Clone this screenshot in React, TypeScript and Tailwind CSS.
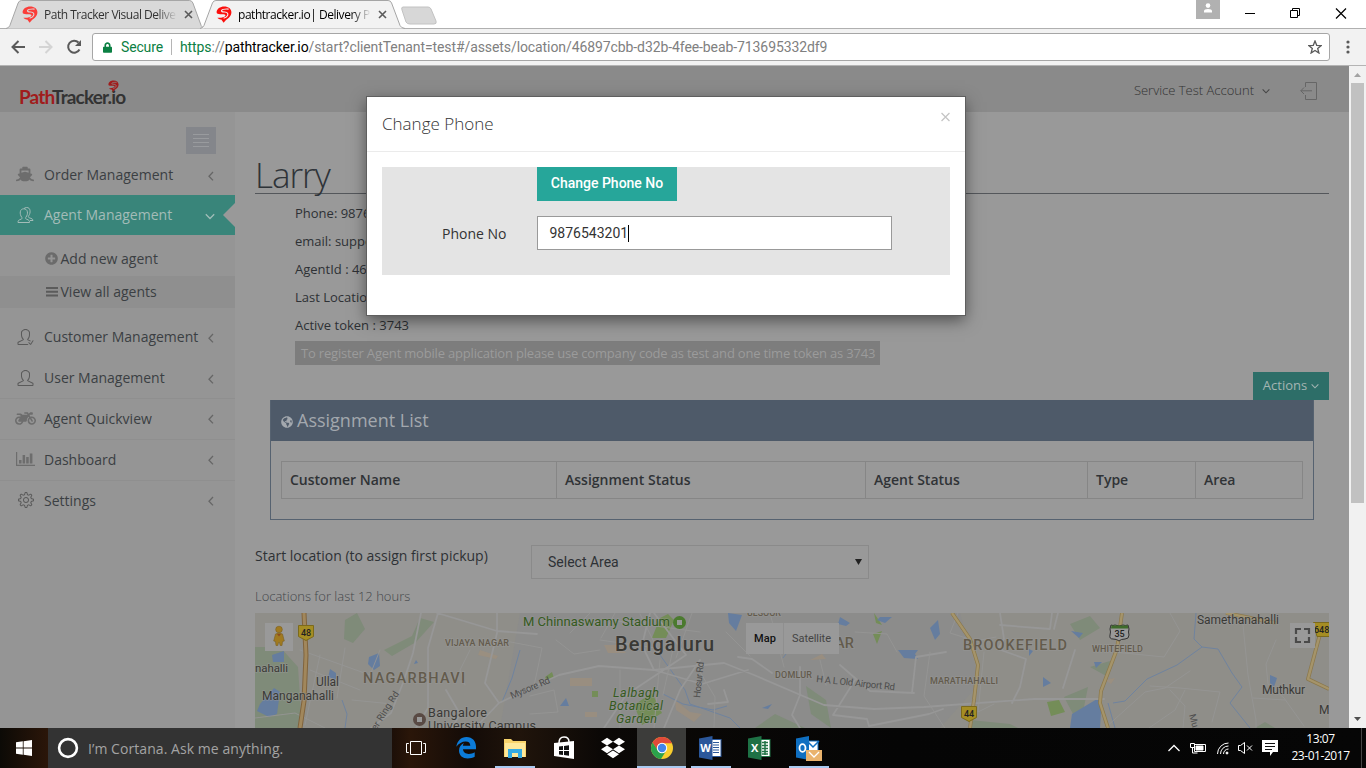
import React from "react";
import { FaShip, FaMotorcycle, FaGlobeAmericas, FaPlusCircle, FaDropbox, FaLock } from "react-icons/fa";
import { SlUser, SlUserFollowing, SlSettings } from "react-icons/sl";

function Mark({ color, hole = "#fff", className }: { color: string; hole?: string; className: string }) {
  return (
    <svg viewBox="0 0 16 17" className={className}>
      <path d="M.6 6.300C.6 2.600 4.200.4 8.200.4c4.200 0 7.200 2.300 7.200 5.900 0 3.600-2.700 6-5.400 7.700L7.600 16.700 5.300 13.600c-1.600-.2-3-.8-3.900-1.900 3.500.3 7.100-.4 8-2C10 8.300 7.500 8.100 5 8.200 2.500 8.300.6 8 .6 6.300z" fill={color} />
      <path d="M12.600 3.100C9 2.900 6 3.500 5.500 4.700c-.4 1.100 1.400 1.100 3.300 1.300 2.400.3 3.700 1.400 2.800 3.400-.6 1.300-2 2.200-4 2.800" fill="none" stroke={hole} strokeWidth="1.100" />
    </svg>
  );
}

function Angle({ className, d = "M6 1L2 5.200l4 4.200" }: { className: string; d?: string }) {
  return (
    <svg viewBox="0 0 10 10" className={className}>
      <path d={d} fill="none" stroke="currentColor" strokeWidth="1.300" />
    </svg>
  );
}

function Tab({ title, active, className }: { title: React.ReactNode; active?: boolean; className: string }) {
  return (
    <div className={"relative h-[29px] shrink-0 " + className}>
      <svg className="absolute inset-0 h-full w-full" viewBox="0 0 206 29" preserveAspectRatio="none">
        <path
          d="M0 28.500Q3 28 4 25.500L12.500 3Q13.500.5 16 .5H189Q191.500.5 192.500 3L201 25.500Q202 28 206 28.500"
          fill={active ? "#f2f2f2" : "#d9d9d9"}
          stroke="#a5a5a5"
        />
      </svg>
      <div className="relative flex h-[29px] items-center pl-[16px]">
        <Mark color={active ? "#fb0f0c" : "#fb3d39"} hole={active ? "#f2f2f2" : "#d9d9d9"} className="h-[17px] w-4" />
        <span className="ml-[6px] w-[133px] overflow-hidden whitespace-nowrap text-[12px] text-[#333] [mask-image:linear-gradient(to_right,#000_85%,transparent)]">
          {title}
        </span>
        <svg viewBox="0 0 9 9" className="ml-[7px] h-[9px] w-[9px]">
          <path d="M1 1l7 7M8 1L1 8" stroke="#5a5a5a" strokeWidth="1.600" />
        </svg>
      </div>
    </div>
  );
}

function Browser() {
  return (
    <header className="h-[66px] shrink-0 bg-white font-['Open_Sans',sans-serif]">
      <div className="flex h-[29px] border-b border-[#b0b0b0]">
        <Tab className="ml-[6px] w-[200px]" title={<span className="tracking-[-0.480px]">Path Tracker Visual Delive</span>} />
        <Tab className="-ml-[6px] w-[205px]" active title={<span className="tracking-[-0.460px] text-black">pathtracker.io| Delivery P</span>} />
        <svg className="-ml-[5px] mt-[6px] h-[19px] w-[38px]" viewBox="0 0 38 19">
          <path d="M3 1h25q2 0 3 2l5 12q1 3-2 3H10q-3 0-4-2L2 4Q1 1 3 1z" fill="#d7d7d7" stroke="#c2c2c2" />
        </svg>
        <div className="flex-1" />
        <div className="flex h-[19px] w-6 items-center justify-center bg-[#b1b1b1]">
          <svg viewBox="0 0 10 10" className="mb-[3px] h-[10px] w-[10px]" fill="#fff">
            <circle cx="5" cy="2.600" r="2.300" />
            <path d="M1 9.500V8q0-2 4-2t4 2v1.500z" />
          </svg>
        </div>
        <svg className="mr-[18px] h-[27px] w-[128px]" viewBox="1220 0 128 27" fill="none" stroke="#000">
          <path d="M1245 13.500h10" />
          <path d="M1290.500 10.500h7v7h-7zM1292.500 10.500v-2h7v7h-2" />
          <path d="M1336 8.500l10 10M1346 8.500l-10 10" strokeWidth="1.200" />
        </svg>
      </div>
      <div className="flex h-[37px] items-center border-b border-[#b4b4b4] bg-[#f2f2f2] pl-[10px]">
        <svg className="h-5 w-[73px]" viewBox="10 37 73 20" fill="none" strokeWidth="2">
          <path d="M25 47H12.500M18.500 41l-6 6 6 6" stroke="#5a5a5a" />
          <path d="M39 47h12.500M45.500 41l6 6-6 6" stroke="#d4d4d4" />
          <path d="M79.500 49.500a6 6 0 1 1-1-7" stroke="#5a5a5a" />
          <path d="M81 40v6h-6z" fill="#5a5a5a" />
        </svg>
        <div className="ml-[9px] flex h-7 w-[1238px] items-center rounded-[3px] border border-[#a6a6a6] bg-white pl-[10px] font-[Roboto,sans-serif] text-[14px]">
          <FaLock className="h-[11px] w-[9px] text-[#0b8043]" />
          <span className="ml-[9px] w-[42px] text-[#0b8043] tracking-[-0.150px]">Secure</span>
          <span className="ml-[8px] mr-[8px] h-4 w-px bg-[#b5b5b5]" />
          <span className="whitespace-nowrap text-[#808080] tracking-[-0.090px]">
            <span className="text-[#0b8043]">https</span>://<span className="text-black">pathtracker.io</span>
            /start?clientTenant=test#/assets/location/46897cbb-d32b-4fee-beab-713695332df9
          </span>
          <svg className="ml-auto mr-[7px] h-[14px] w-[14px]" viewBox="0 0 14 14">
            <path d="M7 1l1.700 4.300 4.500.3-3.500 2.900 1.200 4.500L7 10.500 3.100 13l1.200-4.500L.8 5.600l4.500-.3z" fill="none" stroke="#5a5a5a" strokeWidth="1.300" />
          </svg>
        </div>
        <svg className="ml-[16px] h-[14px] w-1" viewBox="0 0 4 14" fill="#5a5a5a">
          <circle cx="2" cy="2" r="1.600" /><circle cx="2" cy="7" r="1.600" /><circle cx="2" cy="12" r="1.600" />
        </svg>
      </div>
    </header>
  );
}

function NavRow({ icon, label, border, className = "h-[41px]", labelClass = "", open }: { icon: React.ReactNode; label: string; border?: boolean; className?: string; labelClass?: string; open?: boolean }) {
  return (
    <div className={"relative flex items-center pl-4 " + className + (border ? " border-t border-[#8f8f8f] pb-[2px]" : "")}>
      <span className="flex w-[19px] items-center justify-center">{icon}</span>
      <span className={"ml-[9px] flex-1 whitespace-nowrap text-[14px] " + labelClass}>{label}</span>
      {open ? (
        <>
          <Angle className="mr-[20px] mt-[2px] h-[10px] w-[10px] text-[#a0bdb8]" d="M.8 3.300L5 7.500l4.200-4.200" />
          <svg className="absolute right-0 top-[8px] h-6 w-3" viewBox="0 0 12 24"><path d="M12 0L0 12l12 12z" fill="#999" /></svg>
        </>
      ) : (
        <Angle className="mr-[18px] mt-[2px] h-[10px] w-[10px] text-[#666]" />
      )}
    </div>
  );
}

function Sidebar() {
  return (
    <nav className="w-[235px] shrink-0 bg-[#959595] pt-[15px] text-[#3b3f43]">
      <div className="ml-[186px] flex h-[27px] w-[30px] flex-col items-center justify-center gap-[3px] bg-[#84868b]">
        <i className="h-px w-4 bg-[#999b9e]" /><i className="h-px w-4 bg-[#999b9e]" /><i className="h-px w-4 bg-[#999b9e]" /><i className="h-px w-4 bg-[#999b9e]" />
      </div>
      <NavRow icon={<FaShip className="mb-[2px] mr-px h-4 w-[18px] text-[#6d6d6d]" />} label="Order Management" labelClass="tracking-[0.010px]" />
      <NavRow
        open
        className="h-[40px] bg-[#39857a] pb-px text-[#a3bcb8]"
        icon={
          <svg viewBox="0 0 17 16" className="h-4 w-[17px]" fill="none" stroke="currentColor">
            <path d="M1 15.500h11.500c0-2-.5-2.500-3-3.300-1-.4-1.200-1.200-.6-2 1.300-1.600 1.800-3.600 1.500-5.400C10 2.800 8.600 1.800 6.800 1.800S3.600 2.800 3.300 4.800c-.3 1.800.2 3.800 1.400 5.400.6.8.4 1.600-.6 2C1.600 13 1 13.500 1 15.500z" />
            <path d="M7 1.600C7.600.8 8.600.5 9.700.5c1.800 0 3.100 1 3.300 3 .3 1.800-.2 3.700-1.300 5.300-.6.8-.4 1.600.6 2 2.500.8 3.700 1.300 3.700 2.700H13" />
          </svg>
        }
        label="Agent Management"
      />
      <div className="h-[7px]" />
      <div className="flex h-[34px] items-center pb-[2px] pl-[45px] text-[14px]">
        <FaPlusCircle className="h-[13px] w-[13px] text-[#6b6b6b]" />
        <span className="ml-[2.500px]">Add new agent</span>
      </div>
      <div className="flex h-[32px] items-center bg-[#8f8f8f] pb-[2px] pl-[45px] text-[14px]">
        <svg viewBox="0 0 13 11" className="h-[11px] w-[13px]" fill="#5b5b5b"><path d="M1 1h12v2H1zM1 4.700h12v2H1zM1 8.500h12v2H1z" /></svg>
        <span className="ml-[2.500px]">View all agents</span>
      </div>
      <div className="h-[8px]" />
      <NavRow icon={<SlUserFollowing className="h-4 w-[17px] text-[#5a5a5a]" />} label="Customer Management" />
      <NavRow icon={<SlUser className="h-4 w-[17px] text-[#5a5a5a]" />} label="User Management" />
      <NavRow border icon={<FaMotorcycle className="h-[17px] w-[21px] shrink-0 text-[#6d6d6d]" />} label="Agent Quickview" />
      <NavRow
        border
        icon={<svg viewBox="0 0 19 14" className="mr-px h-[14px] w-[19px] shrink-0" fill="#6d6d6d"><path d="M0 0h1.200v12.800H19V14H0zM3 8h2.500v3.500H3zM6.600 3h2.500v8.500H6.600zM10.200 5h2.500v6.500h-2.500zM13.800 1.500h2.600v10h-2.600z" /></svg>}
        label="Dashboard"
      />
      <NavRow border icon={<SlSettings className="h-4 w-4 text-[#5a5a5a]" />} label="Settings" />
    </nav>
  );
}

function MapView() {
  return (
    <svg className="mt-[6px] block h-[115px] w-full font-[Roboto,sans-serif]" viewBox="255 613 1074 115">
      <rect x="255" y="613" width="1074" height="115" fill="#8f8e89" />
      <path d="M520 613h440l20 70-40 45H500z" fill="#8c8c8b" />
      {/* parks and forest */}
      <g fill="#7f8b79">
        <path d="M255 647h25l18 20 4 61h-47zM345 620l12-7 8 16-12 14-9-4zM384 650l28-14 8-18 14 4-18 20-24 14zM806 686l20 14 5 28-20-14zM755 728l20-14 30 14zM1070 624l20-8 10 12-20 12zM1090 667l20-6-2 16zM1064 697l24-10-8 40zM970 728v-8l40 4 8 4zM1255 728l10-6 10 6z" />
      </g>
      <g fill="#748d58">
        <path d="M545 677l7-5 2 6-7 3zM592 691h6v6h-6zM652 638l8-20 8-4 6 6-8 18zM634 705l18-12 10 20-20 12zM1047 702l12-2 6 12-14 4zM873 634l9-3-5 13zM874 613l8 12-6-2z" />
      </g>
      <g fill="#a18f79" opacity=".6">
        <path d="M570 678h22v8h-22zM604 645h16l6 8h-18zM675 700l15 12 12 2-8 8-18-12zM480 650l18 6-2 3-18-4zM1105 680l10-2-4 6zM585 712h12v5h-12zM810 660l12-6 4 5z" />
      </g>
      {/* lakes */}
      <g fill="#657d9f">
        <path d="M369 657l10-4 1 13-6 4-6-6zM330 669l6 4v6l-8-1zM272 655l12-4v11h-11zM260 704l14-16 6 4-3 22-8 3-12-6zM560 706l6-8 3 8zM414 664l2-4 2 3zM728 613l14 2-6 16-7-8zM840 617l10 6-4 3-8-2zM880 617h12l-7 6-8-3zM930 628l8-8 2 14-5 6zM898 650h20l-3 4 3 5-14-1zM762 708l10-4-4 5zM1071 631l12 2-4 5zM1094 662h8l-6 6zM1043 677l8 6-8 4zM1072 714l30-18-2 32h-30zM1270 675l7 3-3 9-4-4zM1029 649l4 2-4 5z" />
      </g>
      <g fill="none" stroke="#6f839f" strokeWidth="1">
        <path d="M345 728l2-14-5-14M520 650l-8 28-10 24M660 655l25 35 5 14 40 14 10 10M663 694l20 10 30 6 14-4M1196 613l-2 26 8 8-25 18-30 14-22 22-12 2M1202 647l16 2 14 24 10 14-12 16 20 25M1108 703l7 25M775 630l14 20-6 8" />
      </g>
      {/* roads */}
      <g fill="none" stroke="#979797" strokeLinecap="round" strokeLinejoin="round">
        <path strokeWidth="1.800" d="M421 613l-8 40-10 30-12 30-20 15M438 613l-10 35v60l-12 20M446 690l14 24-8 14M437 613l60 18 40 3M497 613v20l-12 50 14 20-24 25M499 703l60-28 40-9 55 4 70-7 30 12 70 30 50 4 50-2 110-8h70M650 613l-8 32 12 25 48 14 46-14M654 613l32 42-60 40-22 33M700 660l-20 30-16 38M724 690l4 12-20 2M800 667v28l-8 20 8 13M840 665l30 26 44 2M738 657l14 2 20 14M1000 625l50 4 2-16M1000 613l4 26-6 10 28 10-6 28-8 16M1075 650l-12 38M1058 613l-4 16M912 693l4-36 30-5M855 680l-22 35 34 4 2 7 60-12 14-5" />
        <path strokeWidth=".9" stroke="#959594" d="M300 650l70 25 10-25M320 655l-15 70M345 648l-8 50M310 670l50 20M470 650l-10 20 5 15M500 640l42 8-8 38M590 613l-20 20M600 640l70 10M640 614l20 40M610 620l90 12M615 613l-14 25M620 670v58M660 660l-6 68M675 640l-12 55M692 613l-16 45M700 672l15 25-1 30M726 632l24 24M770 613l14 54M820 660l6 25M855 632l32 2 10 18M930 652l-6 44 26 40M1170 613l10 18-16 26-60-6M1150 686l30 2 40 4-8 30M1242 615l6 60 8 45v8M1276 640l-10 24 2 20 16 14 20 28M1105 728l40-36 20-4 25-17M1170 690l15 16-2 22M984 652l-6 60 16-8M958 613l-8 20 26 8 20-4M1285 700l-32-2M1185 690l-10 20-26 18M255 718l40-5 30 15M352 700l40 4M530 696l24-6 4 22-28 2M556 640l18 14 26-4" />
      </g>
      {/* highways */}
      <g fill="none" strokeLinejoin="round">
        <path d="M304 613l2 42-2 46-4 27" stroke="#81643d" strokeWidth="5" />
        <path d="M304 613l2 42-2 46-4 27" stroke="#a1875c" strokeWidth="3" />
        <path d="M952 613l18 26 8 26-4 35-4 28M1122 613l-5 36-16 42-1 12 8 25M1226 613l50 10M1320 634l-12 45 21 10" stroke="#8b784b" strokeWidth="3.800" />
        <path d="M952 613l18 26 8 26-4 35-4 28M1122 613l-5 36-16 42-1 12 8 25M1226 613l50 10M1320 634l-12 45 21 10" stroke="#a5946a" strokeWidth="2.400" />
      </g>
      {/* labels */}
      <g stroke="#999" strokeWidth="1.600" paintOrder="stroke" strokeOpacity=".5" fill="#635b4c" fontWeight="500">
        <text x="445" y="646" fontSize="9" textLength="64">VIJAYA NAGAR</text>
        <text x="363" y="683" fontSize="14.500" textLength="102">NAGARBHAVI</text>
        <text x="747" y="616" fontSize="9" textLength="34">ULSOOR</text>
        <text x="835" y="648" fontSize="14.500" textLength="19">AR</text>
        <text x="775" y="678" fontSize="9" textLength="37">DOMLUR</text>
        <text x="963" y="650" fontSize="14.500" textLength="104">BROOKEFIELD</text>
        <text x="930" y="684" fontSize="9" textLength="68">MARATHAHALLI</text>
        <text x="1092" y="652" fontSize="9" textLength="51">WHITEFIELD</text>
      </g>
      <g stroke="#999" strokeWidth="1.600" paintOrder="stroke" strokeOpacity=".5" fill="#3a3935">
        <text x="615" y="651" fontSize="20" fontWeight="500" textLength="99">Bengaluru</text>
        <text x="255" y="672" fontSize="11.500" textLength="33">nahalli</text>
        <text x="316" y="686" fontSize="12" textLength="23">Ullal</text>
        <text x="262" y="700" fontSize="12" textLength="72">Manganahalli</text>
        <text x="428" y="717" fontSize="12.500" textLength="59">Bangalore</text>
        <text x="428" y="730" fontSize="12.500" textLength="108">University Campus</text>
        <text x="1197" y="624" fontSize="12" textLength="82">Samethanahalli</text>
        <text x="1262" y="694" fontSize="12" textLength="43">Muthkur</text>
        <text x="1319" y="714" fontSize="12">M</text>
      </g>
      <g stroke="#999" strokeWidth="1.600" paintOrder="stroke" strokeOpacity=".5" fill="#355a20">
        <text x="523" y="626" fontSize="13" textLength="147">M Chinnaswamy Stadium</text>
        <g fontStyle="italic" fontSize="12.500">
          <text x="613" y="697" textLength="46">Lalbagh</text>
          <text x="609" y="710" textLength="54">Botanical</text>
          <text x="616" y="723" textLength="41">Garden</text>
        </g>
      </g>
      <g fill="#4c4c4c" fontSize="9.500">
        <text transform="translate(512 699) rotate(-23)" textLength="42">Mysore Rd</text>
        <text transform="translate(376 731) rotate(-58)" textLength="44">er Ring Rd</text>
        <text transform="translate(700 698) rotate(-84)" textLength="36">Hosur Rd</text>
        <text transform="translate(816 682) rotate(6)" textLength="79">H A L Old Airport Rd</text>
        <text transform="translate(1189 715) rotate(75)">Mu</text>
      </g>
      <circle cx="679.500" cy="622.500" r="6.500" fill="#4b7a2f" /><rect x="677" y="620" width="5" height="5" fill="#999" />
      <circle cx="419.500" cy="719.500" r="6.500" fill="#594a44" /><rect x="417" y="717" width="5" height="5" fill="#999" />
      <g fill="#a58d23" stroke="#7c6a1c">
        <path d="M298.500 625.500h15v11l-7.500 4-7.500-4zM961.500 706.500h15v11l-7.500 4-7.500-4zM1313.500 622.500H1330v14h-13z" />
      </g>
      <g fontSize="9" fontWeight="500" fill="#222">
        <text x="301" y="636">48</text><text x="964" y="717">44</text><text x="1314" y="633">648</text>
      </g>
      <path d="M1111 625q2 1 4 0l4 1 4-1q2 1 5 0l1 4q-1 3 0 6 0 4-4 4-4 0-6 2-2-2-6-2-4 0-3-4 1-3 0-6z" fill="#999" stroke="#333" />
      <path d="M1111.500 625.500h16.500v3h-17z" fill="#3e6b2b" />
      <text x="1114.500" y="637" fontSize="9" fontWeight="500" fill="#222">35</text>
      {/* controls */}
      <rect x="265" y="623" width="28" height="28" fill="#999" />
      <circle cx="279" cy="629.500" r="3.300" fill="#a07a20" stroke="#7b6022" strokeWidth=".6" />
      <path d="M275.500 634q3.500-2 7 0l1.800 7-1.800.5-.5 4h-1.800l-.7-3h-1l-.7 3H276l-.5-4-1.800-.5z" fill="#a07a20" stroke="#7b6022" strokeWidth=".6" />
      <path d="M277 634l2 2.500 2-2.500z" fill="#8b4a20" />
      <rect x="746" y="623" width="93" height="31" fill="#999" />
      <path d="M783.500 623v31" stroke="#8f8f8f" />
      <text x="754" y="642" fontSize="11" fontWeight="500" textLength="22" fill="#111">Map</text>
      <text x="792" y="642" fontSize="11" textLength="39" fill="#444">Satellite</text>
      <rect x="1290" y="623" width="25" height="25" fill="#999" />
      <path d="M1296 634v-5h5M1304 629h5v5M1309 637v5h-5M1301 642h-5v-5" fill="none" stroke="#4a4a4a" strokeWidth="2.200" />
    </svg>
  );
}

function Content() {
  return (
    <main className="w-[1114px] bg-[#999] pl-5 pr-5 pt-[39px] text-[13px] text-[#2e3135]">
      <h1 className="h-[43px] border-b border-[#54575b] text-[35px] font-light leading-[48px] tracking-[-1px] text-[#2e3338]">Larry</h1>
      <ul className="ml-10 mt-[5px]">
        {["Phone: 987654", "email: suppor", "AgentId : 4689", "Last Location", "Active token : 3743"].map((t) => (
          <li key={t} className="h-7 leading-7">{t}</li>
        ))}
      </ul>
      <div className="ml-10 mt-[2px] h-6 w-[585px] whitespace-nowrap bg-[#7d7d7d] pl-[6px] text-[13px] leading-6 tracking-[-0.190px] text-[#9b9b9b]">
        To register Agent mobile application please use company code as test and one time token as 3743
      </div>
      <div className="mt-[7px] flex justify-end">
        <button className="flex h-7 w-[76px] items-center justify-center gap-1 bg-[#2d6e68] text-[13px] text-[#a4b5b3]">
          Actions
          <Angle className="h-[8px] w-[8px]" d="M.8 3L5 7.200 9.200 3" />
        </button>
      </div>
      <section className="mx-[15px] h-[120px] border border-[#566270]">
        <h2 className="-mt-px flex h-[41px] items-center bg-[#4e5a69] pl-[10px] text-[18px] text-[#a3a8ae]">
          <FaGlobeAmericas className="mr-[4px] mt-[2px] h-[12px] w-[12px]" />
          <span>Assignment List</span>
        </h2>
        <div className="mx-[10px] mt-5 grid h-[38px] grid-cols-[275px_309px_222px_108px_108px] border border-[#868686] text-[14px] font-semibold text-[#303336]">
          {["Customer Name", "Assignment Status", "Agent Status", "Type", "Area"].map((t) => (
            <div key={t} className="border-r border-[#868686] pl-2 leading-9 last:border-r-0">{t}</div>
          ))}
        </div>
      </section>
      <div className="mt-[25px] flex h-[34px]">
        <span className="w-[276px] text-[14px] leading-[22px]">Start location (to assign first pickup)</span>
        <div className="flex w-[338px] items-center border border-[#8a8a8a] pl-4 pr-[6px] font-[Roboto,sans-serif] text-[14px]">
          <span className="flex-1">Select Area</span>
          <svg viewBox="0 0 7 6" className="h-[6px] w-[7px]"><path d="M0 0h7L3.500 6z" fill="#222" /></svg>
        </div>
      </div>
      <p className="mt-[6px] h-[22px] text-[13px] font-light leading-[22px] text-[#44474a]">Locations for last 12 hours</p>
      <MapView />
    </main>
  );
}

function Modal() {
  return (
    <div className="absolute left-[367px] top-[97px] h-[218px] w-[598px] bg-white shadow-[0_5px_15px_rgba(0,0,0,0.5)] outline outline-[#5f5f5f]">
      <div className="flex h-[55px] justify-between border-b border-[#ebebeb] px-[15px]">
        <h4 className="mt-[15px] text-[17px] font-light leading-[24px] text-[#333]">Change Phone</h4>
        <svg viewBox="0 0 10 10" className="mt-[15px] h-[10px] w-[9px]"><path d="M.6.6l8.800 8.800M9.400.6L.6 9.400" stroke="#c4c4c4" strokeWidth="1.400" /></svg>
      </div>
      <div className="mx-[15px] mt-[15px] h-[108px] bg-[#e4e4e4] font-[Roboto,sans-serif] text-[14px]">
        <button className="ml-[155px] block h-[34px] w-[140px] bg-[#26a69a] pb-[2px] font-medium text-white">Change Phone No</button>
        <div className="mt-[15px] flex h-[34px] items-center">
          <label className="w-[124.500px] text-right font-['Open_Sans',sans-serif] text-[14px] text-[#333]">Phone No</label>
          <div className="ml-[30.500px] flex h-[34px] w-[355px] items-center border border-[#999] bg-white pl-[11.500px] text-[#333]">
            <span>9876543201</span>
            <i className="h-[17px] w-px bg-black" />
          </div>
        </div>
      </div>
    </div>
  );
}

function Slot({ children, className = "" }: { children: React.ReactNode; className?: string }) {
  return <div className={"flex h-10 w-[49px] shrink-0 flex-col items-center " + className}>{children}</div>;
}

function Bar({ className = "w-10" }: { className?: string }) {
  return <i className={"mt-auto h-[2px] shrink-0 bg-[#a9c9f0] " + className} />;
}

function Office({ letter, color, dark }: { letter: string; color: string; dark: string }) {
  return (
    <svg viewBox="0 0 23 24" className="mt-2 h-6 w-[23px]">
      <rect x="11" y="3.500" width="11" height="17" fill="#fff" stroke={color} />
      {letter === "X" ? (
        <path d="M14 6.500h6M14 9.500h6M14 12.500h6M14 15.500h6M14 18h6M17 5v14" stroke={color} strokeWidth="1.500" />
      ) : (
        <path d="M14 6.500h6M14 9h6M14 11.500h6M14 14h6M14 16.500h6" stroke={color} />
      )}
      <path d="M0 2.500L13.500 0v24L0 21.500z" fill={dark} />
      <text x="6.600" y="16" textAnchor="middle" fontSize="11" fontWeight="700" fill="#fff" fontFamily="Open Sans">{letter}</text>
    </svg>
  );
}

function Taskbar() {
  return (
    <footer className="flex h-10 shrink-0 bg-[linear-gradient(90deg,#0c0a06_0,#2b1609_48px,#1c0f08_392px,#2a1609_410px,#130b07_470px,#20140b_520px,#0b0806_600px,#050505_900px,#060606_100%)] font-['Open_Sans',sans-serif] text-white">
      <div className="flex w-12 items-center justify-center">
        <svg viewBox="0 0 16 16" className="h-4 w-4" fill="#fff"><path d="M0 2.200L6.800 1.300v6.300H0zM7.600 1.200L16 0v7.600H7.600zM0 8.400h6.800v6.300L0 13.800zM7.600 8.400H16V16l-8.400-1.200z" /></svg>
      </div>
      <div className="flex w-[344px] items-center bg-[#333] pl-[9px]">
        <svg viewBox="0 0 22 22" className="h-[22px] w-[22px]"><circle cx="11" cy="11" r="8.900" fill="none" stroke="#fff" strokeWidth="2.600" /></svg>
        <span className="ml-[9px] whitespace-nowrap text-[14px] tracking-[0.060px] text-[#a3a3a3]">I’m Cortana. Ask me anything.</span>
      </div>
      <Slot className="-ml-px">
        <svg viewBox="0 0 20 14" className="mt-[13px] h-[14px] w-5" fill="none" stroke="#fff"><path d="M4.500.5h11v13h-11zM2.800 2.500H.5v9h2.300M17.200 2.500h2.300v9h-2.300" /></svg>
      </Slot>
      <Slot className="ml-px">
        <svg viewBox="0 0 20 22" className="mt-[9px] h-[22px] w-5"><path d="M.3 9.700C1.200 4 4.800 0 10.500 0 16.500 0 20 4.300 20 9.700v2.600H7c.2 3.200 2.600 4.600 5.700 4.600 2.300 0 4.300-.7 6-1.700v4.600c-2 1.100-4.300 1.700-7 1.700-5 0-8.700-3-8.700-8 0-3.500 2-6.300 5-7.600-.7.800-1 1.700-1.100 2.800h7.400c0-2.600-1.500-4.200-4.600-4.200C6 4.500 2.800 6.500.3 9.700z" fill="#0c7bd8" /></svg>
      </Slot>
      <Slot>
        <svg viewBox="0 0 22 20" className="mt-[10px] h-5 w-[22px]"><path d="M0 1h7l2 2h13v16H0z" fill="#f7d36b" /><path d="M1 5h20v14H1z" fill="#fde89a" /><path d="M4 11h14v9h-4v-5H8v5H4z" fill="#35abe2" /></svg>
        <Bar />
      </Slot>
      <Slot>
        <svg viewBox="0 0 22 24" className="mt-2 h-6 w-[22px]"><path d="M1 7l20-2v18L1 20z" fill="#fff" /><path d="M6 7q0-6 5-6t5 5" fill="none" stroke="#fff" strokeWidth="1.500" /><path d="M6 10.500l4-.5v4H6zM11 9.900l5-.6V14h-5zM6 15h4v4l-4-.5zM11 15h5v4.700l-5-.6z" fill="#111" /></svg>
      </Slot>
      <Slot><FaDropbox className="mt-[8px] h-6 w-6" /></Slot>
      <Slot className="bg-[#3c3c3a]">
        <svg viewBox="-12 -12 24 24" className="mt-2 h-[24px] w-[24px]">
          <circle r="11" fill="#f8cd2e" />
          <path d="M-9.500-5.500A11 11 0 0 1 10-4.800H0L-4.500 2.500z" fill="#e04a3a" />
          <path d="M-9.500-5.500A11 11 0 0 0-1 11L4 3-4.400 2z" fill="#2ba24c" />
          <circle r="5.200" fill="#fff" /><circle r="4.200" fill="#4285ea" />
        </svg>
        <Bar className="w-[49px]" />
      </Slot>
      <Slot><Office letter="W" color="#2b579a" dark="#2b579a" /><Bar /></Slot>
      <Slot><Office letter="X" color="#217346" dark="#1e7145" /></Slot>
      <Slot>
        <svg viewBox="0 0 26 25" className="mt-2 h-[25px] w-[26px] shrink-0">
          <rect x="11" y="5" width="11" height="12" fill="#fff" stroke="#0f6fc1" /><path d="M12 6l5 5 6-6" fill="none" stroke="#0f6fc1" strokeWidth="1.500" />
          <path d="M0 2.500L13 0v24L0 21.500z" fill="#0f6fc1" />
          <ellipse cx="6.500" cy="12" rx="3" ry="3.800" fill="none" stroke="#fff" strokeWidth="1.800" />
          <rect x="10" y="14" width="16" height="11" fill="#eab36d" /><path d="M13 16l5 5 5-5" fill="none" stroke="#fff" strokeWidth="1.300" />
        </svg>
        <Bar />
      </Slot>
      <div className="flex-1" />
      <svg className="h-10 w-[114px]" viewBox="1166 728 114 40" fill="none" stroke="#fff">
        <path d="M1168.500 751l5.500-5.500 5.500 5.500" strokeWidth="1.300" />
        <path d="M1194.500 744.500h11v7h-11z" /><path d="M1196 746h7v4h-7z" fill="#fff" /><path d="M1190.500 743.500h4v4h-4zM1192.500 747v6h5" />
        <path d="M1217.500 754a11 11 0 0 1 11-11M1220.500 754a8 8 0 0 1 8-8M1223.500 754a5 5 0 0 1 5-5" />
        <circle cx="1227" cy="753" r="1" fill="#fff" />
        <path d="M1238.500 745.500h2l4-3v11l-4-3h-2zM1247 745.500l5 5M1252 745.500l-5 5" />
        <path d="M1262 740h16v12h-5l-3 4v-4h-8z" fill="#fff" stroke="none" /><path d="M1265 743.500h10M1265 746.500h10M1265 749.500h7" stroke="#111" />
      </svg>
      <div className="flex w-[81px] flex-col items-center pt-[2px] text-[12px] leading-[17px] tracking-[-0.450px]">
        <span>13:07</span><span>23-01-2017</span>
      </div>
      <div className="w-[5px] border-l border-[#454545]" />
    </footer>
  );
}

export default function App() {
  return (
    <div className="relative flex h-[768px] w-[1366px] flex-col overflow-hidden font-['Open_Sans',sans-serif]">
      <Browser />
      <div className="flex h-[662px] shrink-0 overflow-hidden">
        <div className="flex w-[1349px] flex-col bg-[#999]">
          <div className="flex h-[46px] shrink-0 items-center bg-[#8a8a8a]">
            <div className="relative ml-[19px] mt-[16px] h-6 whitespace-nowrap font-[Lato,sans-serif] text-[19px] font-bold leading-6 tracking-[-0.850px] text-[#333]">
              <span className="text-[#a01c1c]">Path</span>Tracker.io
              <Mark color="#a01c1c" hole="#8a8a8a" className="absolute -top-[5px] right-[6px] h-[12px] w-[11px]" />
            </div>
            <span className="ml-auto mt-[3px] text-[13px] font-light text-[#333]">Service Test Account</span>
            <Angle className="ml-[8px] mr-[30px] mt-[4px] h-[8px] w-[8px] text-[#444]" d="M.8 3L5 7.200 9.200 3" />
            <svg viewBox="0 0 17 18" className="mr-[32px] mt-[4px] h-[18px] w-[17px]" fill="none" stroke="#666"><path d="M5.500 5V.5h11v17h-11V13M12 8.800H.8M4 5.500L.8 8.800 4 12" /></svg>
          </div>
          <div className="flex flex-1">
            <Sidebar />
            <Content />
          </div>
        </div>
        <div className="flex w-[17px] flex-col items-center bg-[#f1f1f1]">
          <svg viewBox="0 0 7 4" className="mt-[7px] h-1 w-[7px]"><path d="M3.500 0L7 4H0z" fill="#a3a3a3" /></svg>
          <div className="mt-[6px] h-[420px] w-[13px] bg-[#c1c1c1]" />
          <svg viewBox="0 0 7 4" className="mb-[7px] mt-auto h-1 w-[7px]"><path d="M3.500 4L7 0H0z" fill="#505050" /></svg>
        </div>
      </div>
      <Taskbar />
      <Modal />
    </div>
  );
}
